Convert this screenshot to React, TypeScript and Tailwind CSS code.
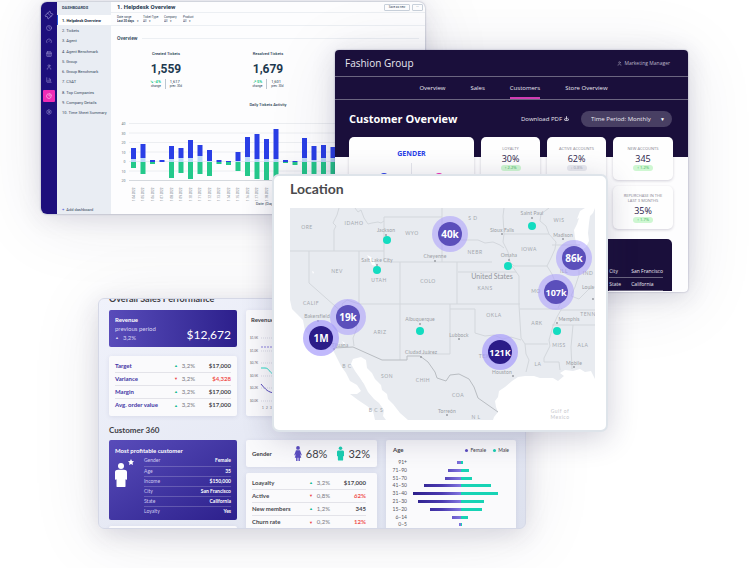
import React from "react";
import { BarChart3, CalendarDays, Clock, Download, Gauge, PieChart, Settings, Ticket, User } from "lucide-react";

/* ---------- Helpdesk window ---------- */

const dashboards = [
  "1. Helpdesk Overview",
  "2. Tickets",
  "3. Agent",
  "4. Agent Benchmark",
  "5. Group",
  "6. Group Benchmark",
  "7. CSAT",
  "8. Top Companies",
  "9. Company Details",
  "10. Time Sheet Summary",
];

const railIcons = [
  { icon: Ticket, name: "Tickets" },
  { icon: Clock, name: "Recent" },
  { icon: Gauge, name: "Performance" },
  { icon: CalendarDays, name: "Calendar" },
  { icon: User, name: "People" },
  { icon: BarChart3, name: "Reports" },
  { icon: PieChart, name: "Analytics", active: true },
  { icon: Settings, name: "Settings" },
];

const filters = [
  { label: "Date range", value: "Last 30 days", width: "w-[26px]", bold: true },
  { label: "Ticket Type", value: "All", width: "w-[21px]" },
  { label: "Company", value: "All", width: "w-[19px]" },
  { label: "Product", value: "All", width: "w-[20px]" },
];

// [opened, carried over, resolved] per day
const activity = [
  [14, 3, 6], [18, 4, 12], [2, 0, 2], [2, 0, 0], [16, 3, 16], [14, 4, 11], [22, 4, 17],
  [17, 6, 12], [12, 1, 14], [2, 0, 2], [1, 0, 3], [10, 1, 9], [25, 5, 14], [28, 3, 17],
  [23, 3, 18], [33, 3, 16], [2, 0, 1], [1, 0, 3], [24, 4, 14], [16, 2, 14], [17, 4, 14],
  [15, 4, 14], [20, 3, 13], [12, 2, 8], [18, 3, 12], [9, 1, 6], [14, 3, 11], [10, 2, 8],
];

function ActivityChart() {
  return (
    <svg viewBox="0 0 600 190" className="block w-[300px]" role="img" aria-label="Daily Tickets Activity">
      {["40", "30", "20", "10", "0", "10", "20"].map((t, i) => (
        <g key={i}>
          <line x1="26" x2="600" y1={9 + i * 19} y2={9 + i * 19} stroke={i === 6 ? "#d5d9de" : "#eceef1"} strokeWidth="2" />
          <text x="19" y={12 + i * 19} fontSize="7" textAnchor="end" fill="#6b7785">{t}</text>
        </g>
      ))}
      {activity.map(([up, light, down], i) => {
        const x = 30 + i * 19;
        return (
          <g key={i}>
            <rect x={x} y={86 - up * 2} width="10" height={(up - light) * 2} fill="#2a3fe6" />
            <rect x={x} y={86 - light * 2} width="10" height={light * 2} fill="#bcd9f8" />
            <rect x={x} y={86} width="10" height={down * 2} fill="#25c98b" />
            <text transform={`translate(${x + 7} 164) rotate(-90)`} fontSize="6" fill="#6b7785">
              {`1.${String(i + 4).padStart(2, "0")}.2022`}
            </text>
          </g>
        );
      })}
      <text x="298" y="172" fontSize="8" textAnchor="middle" fill="#33475b">Date (Day)</text>
    </svg>
  );
}

function TicketStat({ title, value, change, previous, up }: { title: string; value: string; change: string; previous: string; up?: boolean }) {
  return (
    <section className="flex w-[102px] flex-col items-center text-[#1d3a50]">
      <h4 className="text-[4px] leading-[8px] font-medium">{title}</h4>
      <p className="mt-1 text-[12px] leading-[15px] font-bold">{value}</p>
      <div className="mt-[2px] flex text-[3px] leading-[5px]">
        <div className="border-r border-[#bcc6d0] pr-1 text-right">
          <p className="text-[4px] font-bold text-[#25c98b]">{up ? "↗" : "↘"} {change}</p>
          <p>change</p>
        </div>
        <div className="pl-1">
          <p className="text-[4px]">{previous}</p>
          <p>prev. 30d</p>
        </div>
      </div>
    </section>
  );
}

function HelpdeskWindow() {
  return (
    <section className="absolute top-[2px] left-[41px] flex h-[212px] w-[384px] overflow-hidden rounded-md bg-[#fdfdfe] font-[Roboto,sans-serif] shadow-[0_8px_70px_rgba(40,35,80,0.1),0_4px_24px_rgba(40,35,80,0.12),0_0_2px_rgba(50,70,110,0.5)]">
      <nav aria-label="Main" className="flex w-4 flex-col items-center gap-px bg-[#1d0f7c] pt-[7px]">
        {railIcons.map(({ icon: Icon, name, active }) => (
          <button
            key={name}
            aria-label={name}
            className={`flex size-3 shrink-0 items-center justify-center rounded-[1px] ${active ? "my-[3px] bg-[#ef2bb5] text-white" : "text-[#aaa3dc]"}`}
          >
            <Icon size={name === "Tickets" ? 8 : 6} className={name === "Tickets" ? "-rotate-45" : ""} />
          </button>
        ))}
      </nav>
      <aside className="flex w-[54px] flex-col bg-[#e9edf3] text-[4px] leading-[5px] text-[#33475b]">
        <h2 className="px-[5px] pt-[3px] pb-[5px] text-[4px] font-bold">DASHBOARDS</h2>
        <ul className="grid h-[103px] grid-rows-10">
          {dashboards.map((d, i) => (
            <li key={d} className={`flex items-center border-l ${i === 0 ? "border-[#2856d8] bg-white font-bold text-[#152a3c]" : "border-transparent"}`}>
              <a href="#" className="pl-1 whitespace-nowrap">{d}</a>
            </li>
          ))}
        </ul>
        <button className="mt-auto px-[5px] pb-[2px] text-left">
          <span className="text-[#3d4bd8]">+</span>&nbsp; Add dashboard
        </button>
      </aside>
      <div className="flex min-w-0 flex-1 flex-col">
        <header className="flex h-[11px] items-center justify-between border-b border-[#eceff3] pr-[2px] pl-[6px]">
          <h1 className="text-[6px] leading-[8px] font-bold text-[#1d3a50]">1. Helpdesk Overview</h1>
          <div className="flex gap-[2px] text-[3px] leading-[5px] text-[#33475b]">
            <button className="w-[26px] rounded-[1px] border border-[#c9d1db]">Save as new</button>
            <button aria-label="More" className="w-[11px] rounded-[1px] border border-[#c9d1db]">···</button>
          </div>
        </header>
        <form className="flex h-[13px] items-center border-b border-[#eceff3] pl-[6px] text-[4px] leading-[4px] text-[#33475b]">
          {filters.map((f) => (
            <label key={f.label} className={`block ${f.width} whitespace-nowrap`}>
              <span className="block text-[3px]">{f.label}</span>
              <span className="flex items-center gap-[2px]">
                <select className={`appearance-none ${f.bold ? "font-bold" : ""} text-[3px] leading-[4px]`}>
                  <option>{f.value}</option>
                </select>
                <span className="text-[3px]">▾</span>
              </span>
            </label>
          ))}
        </form>
        <div className="flex items-center gap-1 px-[6px] pt-2">
          <h2 className="text-[5px] leading-[8px] font-medium text-[#1d3a50]">Overview</h2>
          <div className="h-px flex-1 bg-[#eceff3]" />
        </div>
        <div className="mt-2 flex pl-1">
          <TicketStat title="Created Tickets" value="1,559" change="-4%" previous="1,617" />
          <TicketStat title="Resolved Tickets" value="1,679" change="5%" previous="1,601" up />
        </div>
        <h3 className="mt-3 text-center text-[4px] leading-[8px] font-medium text-[#1d3a50]">Daily Tickets Activity</h3>
        <div className="mt-[10px] pl-[5px]">
          <ActivityChart />
        </div>
      </div>
    </section>
  );
}

/* ---------- Fashion Group window ---------- */

function KpiCard({ title, value, delta, neutral }: { title: string; value: string; delta: string; neutral?: boolean }) {
  return (
    <section className="flex h-[43px] flex-col items-center justify-center rounded-[5px] bg-[#fefefe] text-center shadow-[0_1px_3px_rgba(40,30,70,0.2)]">
      <h3 className="text-[4px] leading-[5px] whitespace-pre-line text-[#85828e]">{title}</h3>
      <p className="mt-[2px] text-[9px] leading-[11px] text-[#2a2148]">{value}</p>
      <p className={`mt-px w-5 rounded-full text-[4px] leading-[6px] ${neutral ? "bg-[#e8e9ef] text-[#a3a6b5]" : "bg-[#cff7d2] text-[#35ad55]"}`}>
        {neutral ? "↓" : "↑"} {delta}
      </p>
    </section>
  );
}

function FashionWindow() {
  return (
    <section className="absolute top-[50px] left-[335px] h-[242px] w-[353px] overflow-hidden rounded-[4px] bg-[#fdfdfe] font-['Open_Sans',sans-serif] shadow-[0_8px_70px_rgba(40,35,80,0.1),0_4px_24px_rgba(40,35,80,0.16),0_0_2px_rgba(50,50,110,0.4)]">
      <div className="h-[107px] bg-[#1a0f3b] text-[#e9e7f0]">
        <header className="flex h-[27px] items-center justify-between border-b border-[#6b6580] pr-[18px] pl-[10px]">
          <h1 className="text-[10px] leading-[14px]">Fashion Group</h1>
          <p className="flex items-center gap-[2px] text-[5px] leading-[7px] text-[#b9b5c8]">
            <User size={5} /> Marketing Manager
          </p>
        </header>
        <nav aria-label="Sections" className="flex h-[23px] justify-center gap-[25px] border-b border-[#6b6580] pl-1 text-[6px] leading-[22px]">
          <a href="#">Overview</a>
          <a href="#">Sales</a>
          <a href="#" aria-current="page" className="border-b-2 border-[#d13cb4]">Customers</a>
          <a href="#">Store Overview</a>
        </nav>
        <div className="flex h-[37px] items-center pr-4 pl-[14px]">
          <h2 className="flex-1 text-[11px] leading-[14px] font-bold text-white">Customer Overview</h2>
          <button className="mr-3 flex items-center gap-[2px] text-[6px] leading-[8px]">
            Download PDF <Download size={5} strokeWidth={4} />
          </button>
          <label className="flex h-4 w-[91px] items-center rounded-full bg-[#483f63] pr-[7px] pl-[10px] text-[6px] leading-[8px]">
            <select aria-label="Time period" className="flex-1 appearance-none">
              <option>Time Period: Monthly</option>
            </select>
            <span className="text-[5px] text-white">▼</span>
          </label>
        </div>
      </div>
      <div className="-mt-5 grid grid-cols-[125px_59px_59px_60px] gap-x-[7px] gap-y-[6px] pr-4 pl-[14px]">
        <section className="row-span-2 rounded-[5px] bg-[#fefefe] shadow-[0_1px_3px_rgba(40,30,70,0.2)]">
          <h3 className="pt-3 text-center text-[7px] leading-[10px] font-bold text-[#2a3fe6]">GENDER</h3>
          <div className="mx-auto mt-1 flex w-[110px] justify-around divide-x divide-[#e5e6ec]">
            <span className="flex flex-1 justify-center pt-[10px]"><span className="size-2 rounded-full bg-[#2a3fe6]" /></span>
            <span className="flex flex-1 justify-center pt-[10px]"><span className="size-2 rounded-full bg-[#ef2bb5]" /></span>
          </div>
        </section>
        <KpiCard title="LOYALTY" value="30%" delta="2.2%" />
        <KpiCard title="ACTIVE ACCOUNTS" value="62%" delta="0.8%" neutral />
        <KpiCard title="NEW ACCOUNTS" value="345" delta="1.2%" />
        <div className="col-start-4">
          <KpiCard title={"REPURCHASE IN THE\nLAST 3 MONTHS"} value="35%" delta="1.7%" />
        </div>
      </div>
      <div className="mt-[10px] mr-4 ml-[14px] flex h-[52px] justify-end rounded-t-[5px] bg-[#1a0f3b] pt-[26px] pr-[9px] text-[5px] leading-[12px] text-[#efedf5]">
        <table className="h-6">
          <tbody>
            <tr className="border-b border-[#6b6580]"><th scope="row" className="w-[22px] text-left font-normal">City</th><td className="w-[30px] whitespace-nowrap">San Francisco</td></tr>
            <tr className="border-b border-[#6b6580]"><th scope="row" className="w-[22px] text-left font-normal">State</th><td>California</td></tr>
          </tbody>
        </table>
      </div>
    </section>
  );
}

/* ---------- Sales window ---------- */

type Row = { name: string; up: boolean; change: string; value: string; bad?: boolean };

const salesRows: Row[] = [
  { name: "Target", up: true, change: "3,2%", value: "$17,000" },
  { name: "Variance", up: false, change: "3,2%", value: "$4,328", bad: true },
  { name: "Margin", up: true, change: "3,2%", value: "$17,000" },
  { name: "Avg. order value", up: true, change: "3,2%", value: "$17,000" },
];

const memberRows: Row[] = [
  { name: "Loayalty", up: true, change: "3,2%", value: "$17,000" },
  { name: "Active", up: false, change: "0,8%", value: "62%", bad: true },
  { name: "New members", up: true, change: "1,2%", value: "345" },
  { name: "Churn rate", up: false, change: "0,2%", value: "12%", bad: true },
];

const profile = [
  ["Gender", "Female"],
  ["Age", "35"],
  ["Income", "$150,000"],
  ["City", "San Francisco"],
  ["State", "California"],
  ["Loyalty", "Yes"],
];

const ages: [string, number, number][] = [
  ["91+", 4, 2], ["71–90", 13, 8], ["51–70", 16, 11], ["41–50", 37, 30], ["31–40", 48, 37],
  ["21–30", 43, 23], ["15–20", 31, 21], ["6–14", 9, 7], ["0–5", 2, 1],
];

const card = "rounded-[2px] bg-[#fafafc] shadow-[0_1px_4px_rgba(60,60,120,0.1)]";

function MetricTable({ rows, accent }: { rows: Row[]; accent: string }) {
  return (
    <table className="w-full text-[6px] leading-[11px]">
      <tbody>
        {rows.map((r) => (
          <tr key={r.name} className="h-[13px] border-b border-[#e3e3e9] last:border-0">
            <th scope="row" className={`text-left font-bold whitespace-nowrap ${accent}`}>{r.name}</th>
            <td className="text-right whitespace-nowrap text-[#77777f]">
              <span className={`mr-1 align-middle text-[4px] leading-[4px] ${r.up ? "text-[#15b88c]" : "text-[#ec4444]"}`}>{r.up ? "▲" : "▼"}</span>
              {r.change}
            </td>
            <td className={`w-9 text-right font-bold ${r.bad ? "text-[#f0504e]" : "text-[#47474d]"}`}>{r.value}</td>
          </tr>
        ))}
      </tbody>
    </table>
  );
}

function PersonIcon({ className, female }: { className: string; female?: boolean }) {
  return (
    <svg viewBox="0 0 16 32" className={className} fill="currentColor" aria-hidden="true">
      <circle cx="8" cy="4" r="4" />
      {female ? (
        <path d="M5 9h6c1 0 2 1 2 2l3 8-2 1-2-4v1l3 8h-3v7H9v-7H7v7H4v-7H1l3-8v-1l-2 4-2-1 3-8c0-1 1-2 2-2z" />
      ) : (
        <path d="M4 9h8c2 0 4 1 4 3v9c0 2-2 2-2 0v10c0 1-1 1-2 1H4c-1 0-2 0-2-1V21c0 2-2 2-2 0v-9c0-2 2-3 4-3z" />
      )}
    </svg>
  );
}

function RevenueChart() {
  return (
    <svg viewBox="0 0 131 84" className="block w-[131px]" role="img" aria-label="Revenue by month">
      {["$1,5K", "$1,0K", "$0,7K", "$0,5K", "$0,2K", "$0,0K"].map((t, i) => (
        <g key={i}>
          <text x="12" y={9 + Math.round(i * 12.5)} fontSize="3" textAnchor="end" fill="#66666e">{t}</text>
          <line x1="15" x2="126" y1={8 + Math.round(i * 12.5)} y2={8 + Math.round(i * 12.5)} stroke="#c4c5d6" strokeDasharray="1 1" opacity="0.6" />
        </g>
      ))}
      <path d="M15 17H126" stroke="#8a80dd" strokeDasharray="2 1" />
      <path d="M15 38h4c4 0 4 4 8 6l20-14 30 10 40-18" fill="none" stroke="#2ad9c4" />
      <path d="M15 54c5 6 7 8 13 9l20-12 30 8 40-20" fill="none" stroke="#5548bb" />
      {[1, 2, 3, 4, 5, 6].map((m) => (
        <text key={m} x={12 + m * 4} y="79" fontSize="3" fill="#66666e">{m}</text>
      ))}
    </svg>
  );
}

function AgeChart() {
  return (
    <svg viewBox="0 0 130 75" className="block w-[130px]" role="img" aria-label="Customers by age">
      <defs>
        <linearGradient id="female" gradientUnits="userSpaceOnUse" x1="27" x2="75" y1="0" y2="0">
          <stop offset="0" stopColor="#2c1f8b" />
          <stop offset="0.6" stopColor="#4a3ab0" />
          <stop offset="1" stopColor="#8276e0" />
        </linearGradient>
      </defs>
      {ages.map(([label, f, m], i) => {
        const y = 4 + Math.round(i * 7.8);
        return (
          <g key={label}>
            <text x="21" y={y + 2} fontSize="5" textAnchor="end" fill="#55555d">{label}</text>
            <rect x={75 - f} y={y - 1} width={f} height="3" fill="url(#female)" />
            <rect x="75" y={y - 1} width={m} height="3" fill="#17d3b5" />
          </g>
        );
      })}
    </svg>
  );
}

function SalesWindow() {
  return (
    <section className="absolute top-[298px] left-[98px] h-[231px] w-[428px] overflow-hidden rounded-md border border-[#d5d8e6] bg-linear-to-br from-[#f0f2fb] to-[#dde1ee] px-[10px] font-[Lato,sans-serif] text-[#3f3f46] shadow-[0_8px_70px_rgba(40,35,80,0.1),0_6px_24px_rgba(40,35,80,0.14)]">
      <h2 className="-mt-[6px] text-[9px] leading-[12px] font-bold">Overall Sales Performance</h2>
      <div className="mt-[5px] grid grid-cols-[128px_131px_130px] gap-x-[9px]">
        <div className="flex flex-col gap-[9px]">
          <section className="flex h-[37px] items-end justify-between rounded-[2px] bg-linear-to-r from-[#594cba] to-[#2d1f8c] px-[6px] pb-[5px] text-white">
            <div className="text-[6px] leading-[9px] text-[#d8d5f2]">
              <h3 className="font-bold text-white">Revenue</h3>
              <p>previous period</p>
              <p><span className="mr-1 align-middle text-[4px] leading-[4px]">▲</span>3,2%</p>
            </div>
            <p className="text-[12px] leading-[15px]">$12,672</p>
          </section>
          <section className={`${card} h-[60px] px-[6px] py-[3px]`}>
            <MetricTable rows={salesRows} accent="text-[#4335a5]" />
          </section>
        </div>
        <section className={card}>
          <h3 className="px-[5px] pt-[5px] text-[6px] leading-[9px] font-bold">Revenue</h3>
          <div className="mt-[6px]"><RevenueChart /></div>
        </section>
        <section className={card} />
      </div>
      <h2 className="mt-2 text-[8px] leading-[12px] font-bold">Customer 360</h2>
      <div className="mt-1 grid grid-cols-[128px_131px_130px] gap-x-[9px]">
        <div className="flex flex-col gap-[6px]">
          <section className="h-20 rounded-[2px] bg-linear-to-br from-[#594cba] to-[#2d1f8c] px-[6px] pt-[6px] text-white">
            <h3 className="text-[6px] leading-[10px] font-bold">Most profitable customer</h3>
            <div className="flex">
              <div className="flex w-[29px] gap-px pt-[3px]">
                <PersonIcon className="h-8 w-[12px]" />
                <svg viewBox="0 0 24 24" className="size-[6px]" fill="currentColor" aria-hidden="true">
                  <path d="M12 0l4 8 8 1-6 6 2 9-8-4-8 4 2-9-6-6 8-1z" />
                </svg>
              </div>
              <table className="flex-1 text-[5px] leading-[9px]">
                <tbody>
                  {profile.map(([k, v]) => (
                    <tr key={k} className="h-[10px] border-b border-white/20 last:border-0">
                      <th scope="row" className="text-left font-normal text-[#cfcaf0]">{k}</th>
                      <td className="text-right font-bold whitespace-nowrap">{v}</td>
                    </tr>
                  ))}
                </tbody>
              </table>
            </div>
          </section>
          <section className={`${card} h-4`} />
        </div>
        <div className="flex flex-col gap-[6px]">
          <section className={`${card} flex h-[27px] items-center pr-[7px] pl-[6px]`}>
            <h3 className="flex-1 text-[6px] leading-[9px] font-bold">Gender</h3>
            <PersonIcon className="h-[15px] w-2 text-[#5a4cc0]" female />
            <p className="mr-[10px] ml-1 text-[11px] leading-[14px]">68%</p>
            <PersonIcon className="h-[15px] w-[7px] text-[#19cfb2]" />
            <p className="ml-1 text-[11px] leading-[14px]">32%</p>
          </section>
          <section className={`${card} py-[3px] pr-[11px] pl-[6px]`}>
            <MetricTable rows={memberRows} accent="text-[#47474d]" />
          </section>
        </div>
        <section className={card}>
          <header className="flex items-center px-[7px] pt-[5px] text-[5px] leading-[10px]">
            <h3 className="flex-1 text-[6px] font-bold">Age</h3>
            <span className="mr-[2px] size-[3px] rounded-full bg-[#5a4cc0]" />Female
            <span className="mr-[2px] ml-[7px] size-[3px] rounded-full bg-[#19cfb2]" />Male
          </header>
          <div className="mt-[3px]"><AgeChart /></div>
        </section>
      </div>
    </section>
  );
}

/* ---------- Location window ---------- */

const regions: [string, number, number][] = [
  ["ORE", 307, 229], ["IDAHO", 354, 225], ["WYO", 412, 235], ["NEV", 337, 273], ["UTAH", 379, 282],
  ["COLO", 428, 283], ["CALIF", 311, 305], ["S D", 473, 220], ["NEBR", 475, 254], ["IOWA", 529, 251],
  ["WIS", 559, 222], ["KANS", 485, 290], ["MO", 536, 293], ["ILL", 564, 273], ["IND", 588, 275],
  ["ARIZ", 380, 334], ["OKLA", 494, 317], ["ARK", 537, 325], ["TENN", 588, 316], ["MISS", 559, 347],
  ["ALA", 583, 347], ["LA", 538, 366], ["TEX", 484, 358], ["SON", 387, 378], ["CHIH", 423, 382],
  ["COA", 458, 397], ["B C", 347, 368], ["B C S", 376, 412], ["N L", 476, 419],
];

const cities: [string, number, number, number, number][] = [
  ["Jackson", 386, 232, 386, 235], ["Salt Lake City", 377, 262, 377, 265], ["Cheyenne", 435, 258, 435, 261],
  ["Saint Paul", 532, 215, 532, 218], ["Sioux Falls", 502, 232, 502, 234], ["Madison", 563, 237, 563, 239],
  ["Omaha", 509, 257, 509, 260], ["Louis", 588, 289, 593, 299], ["Bakersfield", 317, 318, 318, 321],
  ["Albuquerque", 420, 321, 420, 324], ["Ciudad Juárez", 421, 354, 421, 357], ["Lubbock", 459, 337, 459, 339],
  ["Houston", 502, 374, 513, 376], ["Memphis", 569, 321, 557, 323], ["Mobile", 574, 365, 574, 367],
  ["Torreón", 447, 413, 447, 415], ["Tijuana", 340, 347, 334, 349],
];

const dots = [[387, 240], [377, 270], [532, 226], [508, 266], [420, 331], [557, 331]];

const pins: [string, number, number, boolean][] = [
  ["40k", 450, 234, false], ["86k", 574, 258, false], ["107k", 556, 292, false],
  ["19k", 348, 317, false], ["1M", 321, 338, true], ["121K", 500, 352, true],
];

function UsMap() {
  return (
    <svg viewBox="290 208 305 212" className="block w-full font-[Lato,sans-serif]" role="img" aria-label="Customers by location">
      <path
        fill="#e8ebf0"
        d="M290 208H595V379L591 371 585 372 580 369 573 371 565 370 560 373 564 376 558 381 553 378 540 378 534 376 525 376 518 377 512 381 505 387 499 391 498 397 495 401 496 407 498 412 494 417 493 420H408L400 413 393 404 388 399 387 394 382 390 381 385 375 379 372 373 367 368 366 360 361 357 353 359 351 364 355 371 360 378 364 384 368 392 374 399 379 403 384 410 383 416 386 420H375L373 411 367 406 358 400 350 394 357 394 361 391 357 385 350 381 346 373 341 366 337 358 333 350 325 343 313 338 305 331 303 320 297 314 292 309 290 300Z"
      />
      <path fill="#fff" d="M577 219l3-8 5-3h10l-2 5-3 3-1 7-1 10 1 8-3 6-4 3-5-4-2-8-1-8 3-6 2-6zM367 255l4 2 3 4 2 5-4-1-2-5zM312 271l2 1-1 2zM342 341l3 2-1 2zM362 378l3 2v3l-3-2zM370 382l4 3 1 5-4-3z" />
      <g fill="none" stroke="#d3d7dc" strokeWidth="1" strokeLinejoin="round">
        <path d="M290 251H384M339 208l-2 7-4 8 3 3-2 4v21M355 208l3 4 3-2 3 8 4 6 4-1 6-1 3 1 3-2M384 217H442V262M442 208V217M384 217V262H457V304M309 251V283L344 314M359 251V304M400 262V360M359 304H520M344 314l-2-10 5-4 12 4M354 346l-1-8 4-10-3-10-6-4" />
        <path d="M442 240h36l7 3 8-1 7 3 4 3M504 208l-1 8 1 18H549M504 234l-1 8 5 10 2 10 4 4H547M549 234l-3-8-6-5 1-7 8-6M549 234l7 8-1 7-4 9-4 8 5 8 4 10 5 6 1 10-4 8M552 245H580M579 253V275l-4 12-4 9 8 3 10-10 6-2M458 272H516M457 262H492M512 266l7 10V305L521 338" />
        <path d="M450 309H475V333l10 3 9-1 9 4 8-2 10 3M450 304V354H421M520 309H560M560 310H595M552 325H595M521 338l4 6H548M525 344l1 10 3 6-3 12M562 308l-5 9-4 9-4 14 1 6-6 12v4H559l1 8M573 325l-2 22 1 22" />
      </g>
      <path fill="none" stroke="#b9bdc2" strokeWidth="1" strokeLinejoin="round" d="M334 348l19-1 29 13h25v-4h13l8 6 7 10 2 6 9 3 4-6 9-1 10 5 5 8 4 11 10 7 10 7" />
      <g fill="#a3a7ad">
        <g fontSize="5" textAnchor="middle">
          {regions.map(([t, x, y]) => (
            <text key={t} x={x} y={y} className="tracking-widest">{t}</text>
          ))}
        </g>
        <g fontSize="5" textAnchor="middle" fill="#9a9da3" className="tracking-wide">
          {cities.map(([t, x, y, cx, cy]) => (
            <g key={t}>
              <text x={x} y={y}>{t}</text>
              <circle cx={cx} cy={cy} r="1" />
            </g>
          ))}
        </g>
        <text x="492" y="279" fontSize="7" textAnchor="middle" fill="#92959b">United States</text>
        <g fontSize="5" textAnchor="middle" fill="#c6c8cc" className="tracking-widest">
          <text x="560" y="413">Gulf of</text>
          <text x="560" y="419">Mexico</text>
        </g>
      </g>
      {dots.map(([x, y]) => (
        <circle key={`${x}-${y}`} cx={x} cy={y} r="4" fill="#13dcc0" />
      ))}
      {pins.map(([label, x, y, dark]) => (
        <g key={label}>
          <circle cx={x} cy={y} r="18" fill="#a79bfb" fillOpacity={dark ? 0.7 : 0.55} />
          <circle cx={x} cy={y} r="12" fill={dark ? "#2b1c88" : "#5b4fbb"} />
          <text x={x} y={y + 4} fontSize={label.length > 3 ? 9 : 10} fontWeight="700" textAnchor="middle" fill="#fff" className="font-['Noto_Sans',sans-serif]">
            {label}
          </text>
        </g>
      ))}
    </svg>
  );
}

function LocationWindow() {
  return (
    <section className="absolute top-[174px] left-[272px] h-[258px] w-[336px] overflow-hidden rounded-[7px] border-2 border-[#dee4ea] bg-white shadow-[0_6px_30px_rgba(40,35,80,0.22)]">
      <div className="px-4 pr-[11px]">
        <h2 className="pt-1 pb-[10px] font-[Lato,sans-serif] text-[14px] leading-[18px] font-bold text-[#4a4a4d]">Location</h2>
        <UsMap />
      </div>
    </section>
  );
}

export default function App() {
  return (
    <main className="relative min-h-[568px] w-full overflow-hidden bg-white">
      <HelpdeskWindow />
      <FashionWindow />
      <SalesWindow />
      <LocationWindow />
    </main>
  );
}
